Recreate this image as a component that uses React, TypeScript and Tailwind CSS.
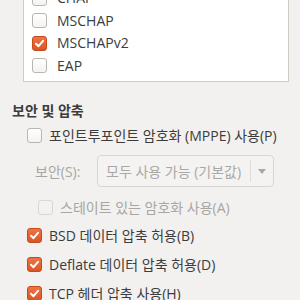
import React from 'react';

type BoxState = 'off' | 'on' | 'disabled';

const Check: React.FC<{ state: BoxState }> = ({ state }) => {
  if (state === 'on') {
    return (
      <span className="w-[15px] h-[15px] shrink-0 rounded-[3px] border border-[#c24a1c] bg-gradient-to-b from-[#ef7442] to-[#db5523] flex items-center justify-center">
        <svg width="11" height="11" viewBox="0 0 11 11">
          <polyline points="2,5.8 4.5,8.2 9,2.8" fill="none" stroke="#fff" strokeWidth="2" strokeLinecap="round" strokeLinejoin="round" />
        </svg>
      </span>
    );
  }
  if (state === 'disabled') {
    return <span className="w-[15px] h-[15px] shrink-0 rounded-[3px] border border-[#d9d7d4] bg-[#f3f2f1]" />;
  }
  return <span className="w-[15px] h-[15px] shrink-0 rounded-[3px] border border-[#b9b6b2] bg-gradient-to-b from-white to-[#f4f3f2]" />;
};

const Row: React.FC<{ state: BoxState; label: string; className?: string; muted?: boolean }> = ({ state, label, className = '', muted }) => (
  <div className={`flex items-center gap-[7px] ${className}`}>
    <Check state={state} />
    <span className={`text-[14px] leading-none whitespace-nowrap ${muted ? 'text-[#a8a6a3]' : 'text-[#3c3c3c]'}`}>{label}</span>
  </div>
);

const methods: { label: string; state: BoxState }[] = [
  { label: 'CHAP', state: 'off' },
  { label: 'MSCHAP', state: 'off' },
  { label: 'MSCHAPv2', state: 'on' },
  { label: 'EAP', state: 'off' },
];

export default function App() {
  return (
    <div
      className="w-[300px] h-[300px] overflow-hidden bg-[#f2f1f0] flex flex-col"
      style={{ fontFamily: '"Open Sans", "Noto Sans CJK KR", sans-serif' }}
    >
      {/* auth methods list, scrolled */}
      <div className="ml-[23px] mt-[-16px] w-[266px] border border-[#cfccc8] bg-white pt-[2px] pb-[4px] pl-[8px] flex flex-col shrink-0">
        {methods.map((m) => (
          <Row key={m.label} state={m.state} label={m.label} className="h-[22.5px] gap-[10px]" />
        ))}
      </div>

      <div className="mt-[18px] ml-[12px] h-[20px] flex items-center text-[14px] font-bold text-[#3c3c3c] shrink-0">
        보안 및 압축
      </div>

      <Row state="off" label="포인트투포인트 암호화 (MPPE) 사용(P)" className="mt-[4px] h-[23px] ml-[27px] shrink-0" />

      <div className="mt-[8px] ml-[35px] flex items-center shrink-0">
        <span className="w-[62px] text-[14px] text-[#a8a6a3]">보안(S):</span>
        <div className="w-[177px] h-[32px] rounded-[4px] border border-[#d8d6d3] bg-[#f4f3f2] flex items-center">
          <span className="flex-1 pl-[8px] text-[14px] text-[#aaa8a5] whitespace-nowrap">모두 사용 가능 (기본값)</span>
          <span className="w-px h-[22px] bg-[#e0dedb]" />
          <span className="w-[22px] flex items-center justify-center">
            <svg width="8" height="5" viewBox="0 0 8 5">
              <polygon points="0,0 8,0 4,5" fill="#a9a7a4" />
            </svg>
          </span>
        </div>
      </div>

      <Row state="disabled" muted label="스테이트 있는 암호화 사용(A)" className="mt-[9px] h-[23px] ml-[38px] shrink-0" />

      <Row state="on" label="BSD 데이터 압축 허용(B)" className="mt-[2px] h-[29px] ml-[27px] shrink-0" />
      <Row state="on" label="Deflate 데이터 압축 허용(D)" className="h-[29px] ml-[27px] shrink-0" />
      <Row state="on" label="TCP 헤더 압축 사용(H)" className="h-[29px] ml-[27px] shrink-0" />
    </div>
  );
}
